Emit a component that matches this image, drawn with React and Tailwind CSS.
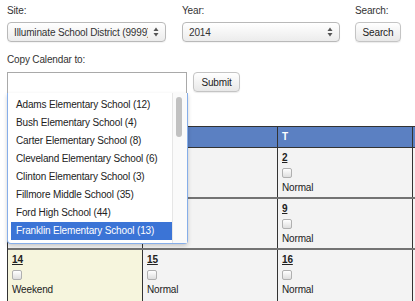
import React from "react";

const schools = [
  "Adams Elementary School (12)",
  "Bush Elementary School (4)",
  "Carter Elementary School (8)",
  "Cleveland Elementary School (6)",
  "Clinton Elementary School (3)",
  "Fillmore Middle School (35)",
  "Ford High School (44)",
  "Franklin Elementary School (13)",
];

// days hidden behind the open listbox are left blank
const rows = [
  [null, null, "2"],
  [null, null, "9"],
  ["14", "15", "16"],
];

function UpDown() {
  return (
    <svg width="6" height="10" viewBox="0 0 6 10" className="shrink-0">
      <path d="M3 0.5 L5.5 4 H0.5 Z" fill="#555" />
      <path d="M3 9.5 L5.5 6 H0.5 Z" fill="#555" />
    </svg>
  );
}

function Select({ value, width }) {
  return (
    <div
      className={`flex items-center h-[20px] ${width} rounded-[4px] border border-[#b9b9b9] bg-gradient-to-b from-white to-[#ececec] pl-[6px] pr-[6px] shadow-[0_1px_1px_rgba(0,0,0,0.05)]`}
    >
      <span className="flex-1 overflow-hidden whitespace-nowrap">
        <span className="block w-[134px] overflow-hidden">{value}</span>
      </span>
      <UpDown />
    </div>
  );
}

function Btn({ children, width }) {
  return (
    <div
      className={`flex items-center justify-center h-[20px] ${width} rounded-[4px] border border-[#c4c4c4] bg-gradient-to-b from-white to-[#e8e8e8] text-[#222] shadow-[0_1px_1px_rgba(0,0,0,0.08)]`}
    >
      {children}
    </div>
  );
}

function Cell({ day, weekend, w = "w-[135px]" }) {
  return (
    <div
      className={`shrink-0 h-full pl-[4px] pt-[3px] ${w} border-r border-[#333] ${
        weekend ? "bg-[#f6f5dd]" : "bg-[#f3f3f3]"
      }`}
    >
      {day && (
        <>
          <div className="h-[14px] leading-[14px] font-bold underline text-[#222]">{day}</div>
          <div className="mt-[3px] w-[10px] h-[10px] rounded-[2px] border border-[#b0b0b0] bg-gradient-to-b from-white to-[#dedede]" />
          <div className="mt-[3px] h-[14px] leading-[14px] text-[#222]">
            {weekend ? "Weekend" : "Normal"}
          </div>
        </>
      )}
    </div>
  );
}

export default function App() {
  return (
    <div className="relative w-[415px] h-[301px] overflow-hidden bg-white text-[10px] tracking-[-0.15px] text-[#333] font-['Liberation_Sans',Arial,sans-serif]">
      <div className="flex pl-[7px] pt-[5px]">
        <div className="w-[159px]">
          <div className="h-[12px] leading-[12px] mb-[5px]">Site:</div>
          <Select value="Illuminate School District (9999)" width="w-[159px]" />
        </div>
        <div className="w-[158px] ml-[16px]">
          <div className="h-[12px] leading-[12px] mb-[5px]">Year:</div>
          <Select value="2014" width="w-[158px]" />
        </div>
        <div className="ml-[15px]">
          <div className="h-[12px] leading-[12px] mb-[5px]">Search:</div>
          <Btn width="w-[46px]">Search</Btn>
        </div>
      </div>

      <div className="pl-[7px] mt-[12px] h-[12px] leading-[12px]">Copy Calendar to:</div>

      <div className="flex pl-[7px] mt-[6px]">
        <div className="w-[180px] h-[50px] border border-[#a9a9a9] bg-white" />
        <div className="ml-[6px]">
          <Btn width="w-[47px]">Submit</Btn>
        </div>
      </div>

      <div className="ml-[7px] mt-[4px] w-[560px] border-l border-[#333]">
        <div className="flex h-[22px] border-y border-[#333] bg-[#5b80c2] text-white font-bold">
          <div className="shrink-0 w-[135px] border-r border-[#333]" />
          <div className="shrink-0 w-[135px] border-r border-[#333]" />
          <div className="shrink-0 w-[135px] border-r border-[#333] pl-[4px] leading-[20px]">T</div>
          <div className="shrink-0 w-[135px] border-r border-[#333]" />
        </div>
        {rows.map((r, i) => (
          <div
            key={i}
            className={`flex ${i < 2 ? "h-[51px] border-b-2 border-[#737373]" : "h-[60px]"}`}
          >
            <Cell day={r[0]} weekend={i === 2} />
            <Cell day={r[1]} />
            <Cell day={r[2]} />
            <Cell day={null} />
          </div>
        ))}
      </div>

      {/* open listbox popup */}
      <div className="absolute left-[7px] top-[93px] w-[181px] h-[151px] flex bg-white border border-t-0 border-[#86aee9] rounded-b-[4px] shadow-[0_2px_4px_rgba(0,0,0,0.18)]">
        <div className="flex-1 pt-[3px] pl-[3px] text-[#222]">
          {schools.map((s, i) => (
            <div
              key={s}
              className={`h-[18px] leading-[18px] pl-[5px] whitespace-nowrap ${
                i === schools.length - 1 ? "bg-[#3b74d6] text-white" : ""
              }`}
            >
              {s}
            </div>
          ))}
        </div>
        <div className="w-[15px] border-l border-[#e6e6e6] bg-[#fafafa] pt-[4px] pl-[3px]">
          <div className="w-[6px] h-[40px] rounded-full bg-[#c1c1c1]" />
        </div>
      </div>
    </div>
  );
}
